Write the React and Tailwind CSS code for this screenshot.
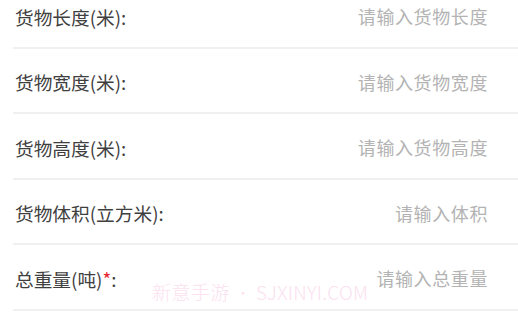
const rows = [
  { label: '货物长度(米)', placeholder: '请输入货物长度' },
  { label: '货物宽度(米)', placeholder: '请输入货物宽度' },
  { label: '货物高度(米)', placeholder: '请输入货物高度' },
  { label: '货物体积(立方米)', placeholder: '请输入体积' },
  { label: '总重量(吨)', placeholder: '请输入总重量', required: true },
];

export default function App() {
  return (
    <div className="relative w-[518px] h-[312px] overflow-hidden bg-white font-['Noto_Sans_CJK_SC',sans-serif]">
      <div className="mt-[-17px] flex flex-col">
        {rows.map((row) => (
          <div
            key={row.label}
            className="ml-[13px] h-[65.5px] border-b-2 border-[#f0f0f0] flex items-center justify-between pr-[30px] pt-[4px]"
          >
            <span className="pl-[2px] text-[18.7px] text-[#3f3f3f]">
              {row.label}
              {row.required && <span className="text-[#e8262d]">*</span>}
              :
            </span>
            <span className="text-[18px] text-[#b3b3b3] tracking-[0.6px]">{row.placeholder}</span>
          </div>
        ))}
      </div>
      <div className="absolute left-[152px] top-[278px] flex items-center text-[19px] font-light text-[#fbe1ef] whitespace-nowrap">
        <span className="tracking-[0.5px]">新意手游</span>
        <span className="mx-[6px] text-[14px]">•</span>
        <span className="tracking-[0.3px]">SJXINYI.COM</span>
      </div>
    </div>
  );
}
